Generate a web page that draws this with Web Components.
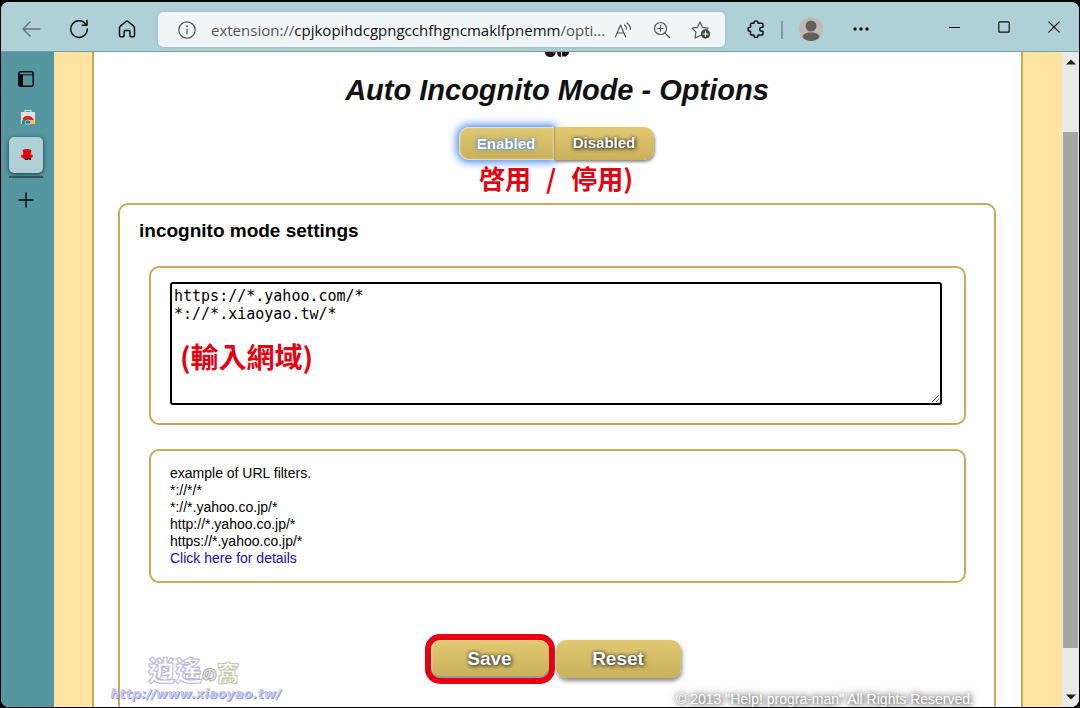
<!DOCTYPE html>
<html lang="en">
<head>
<meta charset="utf-8">
<title>Auto Incognito Mode - Options</title>
<style>
  html, body { margin: 0; height: 100%; }
  body { background: #000; font-family: "Liberation Sans", Arial, sans-serif; color: #000; }
</style>
</head>
<body>
<browser-window>
  <nav-toolbar slot="toolbar"></nav-toolbar>
  <tab-rail slot="tabs"></tab-rail>
  <options-page></options-page>
  <scroll-track slot="scroll"></scroll-track>
</browser-window>

<script>
const define = (name, markup) => customElements.define(name, class extends HTMLElement {
  constructor() {
    super();
    const t = document.createElement('template');
    t.innerHTML = markup;
    this.attachShadow({ mode: 'open' }).append(t.content.cloneNode(true));
  }
});

define('browser-window', `
<style>
  :host { display: block; box-sizing: border-box; height: 100vh; padding: 2px 1px 1px; background: #000; }
  .frame { display: flex; flex-direction: column; height: 100%; border-radius: 8px; overflow: hidden; background: #aed0d6; }
  .body { flex: 1; min-height: 0; display: flex; }
  .view { flex: 1; min-width: 0; overflow: hidden; background: #fee4a0; }
</style>
<div class="frame">
  <slot name="toolbar"></slot>
  <div class="body">
    <slot name="tabs"></slot>
    <div class="view"><slot></slot></div>
    <slot name="scroll"></slot>
  </div>
</div>`);

define('nav-toolbar', `
<style>
  :host { display: block; }
  header { display: flex; align-items: center; height: 49px; padding-left: 6px; background: #aed0d6; border-bottom: 1px solid #7c9da3; }
  button { display: flex; align-items: center; justify-content: center; flex: none; width: 48px; height: 36px; margin: 4px 0 0; padding: 0; border: 0; background: none; color: #111; }
  svg { display: block; fill: none; stroke: currentColor; stroke-width: 1.5; stroke-linecap: round; stroke-linejoin: round; }
  .address svg { stroke-width: 1.2; }
  .dim { color: #63777b; }
  .address { flex: 1; min-width: 0; box-sizing: border-box; display: flex; align-items: center; height: 35px; margin: 6px 7px 0; padding-right: 5px; background: #f0f5f7; border-radius: 5px; box-shadow: 0 0 3px #8fb2b8; color: #555; }
  .address button { width: 39px; height: 35px; margin: 0; color: #555; }
  .address .info { width: 53px; padding-left: 4px; }
  .address .read { width: 30px; margin-right: 4px; }
  .url { flex: 1; min-width: 0; overflow: hidden; white-space: nowrap; font: 15px/24px "Open Sans", "Noto Sans", sans-serif; color: #555; }
  .url b { font-weight: 400; color: #111; }
  .sep { width: 2px; height: 18px; margin: 6px 4px 0 1px; background: #7c9da3; }
  .spacer { width: 42px; flex: none; }
  .win { width: 50px; margin-top: 0; }
</style>
<header>
  <button class="dim" aria-label="Back"><svg width="20" height="18" viewBox="0 0 20 18"><path d="M9 2 2 9l7 7M2 9h17"/></svg></button>
  <button aria-label="Refresh"><svg width="20" height="20" viewBox="0 0 20 20"><path d="M17 5.600A8.300 8.300 0 1 0 18.300 10M18 1.500v4.700h-4.700"/></svg></button>
  <button aria-label="Home"><svg width="18" height="18" viewBox="0 0 18 18"><path d="M1.500 8c0-.8.3-1.300.8-1.800L8 1.500c.6-.5 1.400-.5 2 0l5.700 4.700c.5.5.8 1 .8 1.800v7.500c0 .7-.5 1.200-1.200 1.200h-2.200c-.7 0-1.200-.5-1.200-1.200V11.700c0-.7-.5-1.200-1.200-1.200H7.300c-.7 0-1.200.5-1.200 1.200v3.800c0 .7-.5 1.200-1.200 1.200H2.700c-.7 0-1.200-.5-1.200-1.200z"/></svg></button>
  <div class="address">
    <button class="info" aria-label="Site information"><svg width="18" height="18" viewBox="0 0 18 18"><circle cx="9" cy="9" r="8.200"/><path d="M9 8v5"/><circle cx="9" cy="5.300" r=".4" fill="currentColor"/></svg></button>
    <div class="url">extension://<b>cpjkopihdcgpngcchfhgncmaklfpnemm</b>/opti...</div>
    <button class="read" aria-label="Read aloud"><svg width="18" height="16" viewBox="0 0 18 16"><path d="M1.500 14.800 6.500 3l5 11.800M3.200 11h6.600M10.500 3c1.300 1 2 2.500 2 4M13 1c2.300 1.600 3.500 4 3.500 6.500"/></svg></button>
    <button aria-label="Zoom"><svg width="18" height="18" viewBox="0 0 18 18"><circle cx="7.500" cy="7.500" r="6"/><path d="m12 12 4.500 4.500M4.800 7.500h5.400M7.500 4.800v5.400"/></svg></button>
    <button aria-label="Add to favorites"><svg width="20" height="20" viewBox="0 0 20 20"><path d="M9.500 15.500 4 18l1-5.800L1 8.200l5.500-.8L9 2l2.500 5.400 5.500.8-1 1"/><circle cx="14.500" cy="14" r="4.700" fill="#444" stroke="none"/><path d="M14.500 11.500v5M12 14h5" stroke="#fff"/></svg></button>
  </div>
  <button aria-label="Extensions"><svg width="18" height="18" viewBox="0 0 18 18"><path d="M6.900 3.200a2.100 2.100 0 0 1 4.200 0h3.700c.7 0 1.200.5 1.200 1.200v2.800h-1.200a2 2 0 0 0 0 4H16v2.700c0 .7-.5 1.200-1.200 1.200h-3.700v.3a2.100 2.100 0 0 1-4.200 0v-.3H4.700c-.7 0-1.200-.5-1.200-1.200v-2.700H3a2 2 0 0 1 0-4h.5V4.400c0-.7.5-1.200 1.200-1.200z"/></svg></button>
  <span class="sep"></span>
  <button aria-label="Profile"><svg width="24" height="24" viewBox="0 0 24 24" style="stroke:none"><circle cx="12" cy="12" r="12" fill="#bfb9b5"/><circle cx="12" cy="9" r="5.500" fill="#655f5b"/><path d="M3.500 20.500c0-3 3-5 8.500-5s8.500 2 8.500 5A12 12 0 0 1 12 24a12 12 0 0 1-8.500-3.500z" fill="#655f5b"/></svg></button>
  <button aria-label="Menu" style="width:52px"><svg width="16" height="4" viewBox="0 0 16 4" style="fill:currentColor;stroke:none"><circle cx="2" cy="2" r="1.700"/><circle cx="8" cy="2" r="1.700"/><circle cx="14" cy="2" r="1.700"/></svg></button>
  <span class="spacer"></span>
  <button class="win" aria-label="Minimize"><svg width="11" height="12" viewBox="0 0 11 12" style="stroke-width:1"><path d="M0 6.500h11"/></svg></button>
  <button class="win" aria-label="Maximize"><svg width="12" height="12" viewBox="0 0 12 12" style="stroke-width:1.200"><rect x=".8" y=".8" width="10.400" height="10.400" rx="1"/></svg></button>
  <button class="win" aria-label="Close"><svg width="12" height="12" viewBox="0 0 12 12" style="stroke-width:1.200"><path d="m.8.8 10.400 10.400M11.200.8.8 11.200"/></svg></button>
</header>`);

define('tab-rail', `
<style>
  :host { display: block; flex: none; width: 53px; background: #5596a1; }
  nav { display: flex; flex-direction: column; align-items: center; padding: 8px 3px 0 0; }
  button { display: flex; align-items: center; justify-content: center; width: 36px; height: 38px; padding: 0; border: 0; background: none; color: #0a0a0a; }
  .active { width: 34px; height: 36px; margin-top: 1px; padding-left: 2px; background: #aed0d6; border-radius: 5px; box-shadow: 0 1px 4px #16393f; }
  .store { padding-left: 4px; }
  hr { width: 34px; height: 2px; margin: 3px 0; border: 0; background: #2d5961; }
</style>
<nav>
  <button aria-label="Tab actions"><svg width="16" height="16" viewBox="0 0 16 16"><rect x=".8" y=".8" width="14.400" height="14.400" rx="2" fill="none" stroke="currentColor" stroke-width="1.500"/><path d="M1 3.800h14" stroke="currentColor"/><path d="M1 4h4v11H2.500L1 13.500z" fill="currentColor"/></svg></button>
  <button class="store" aria-label="Web Store"><svg width="16" height="16" viewBox="0 0 16 16"><path d="M5 3V1.500h6V3" fill="none" stroke="#ddd" stroke-width="1.200"/><path d="M1 3h14v12H1z" fill="#dfe1e3"/><path d="M2 15a6.300 6.300 0 0 1 1.500-5.500L8 13v2z" fill="#179c52"/><path d="M2.500 10a6.300 6.300 0 0 1 11.500 1.500L8 12z" fill="#d81f25"/><path d="M9 11h5.500a7 7 0 0 1 0 4H9z" fill="#fbc116"/><path d="M5.500 15a2.800 2.800 0 1 1 5 0z" fill="#2371d3" stroke="#fff" stroke-width=".6"/></svg></button>
  <button class="active" aria-label="Auto Incognito Mode" aria-current="page"><svg width="14" height="14" viewBox="0 0 14 14"><path d="M4 10h7v2H9.500l-.7-1-1 1H5z" fill="#222"/><path d="M2.500 2c2.500-1.200 6.500-1.200 9 0l-1 4.500c1.800-.2 2.800.6 2.300 2-1 2.800-10.500 3-11.800.2-.5-1.300.6-2.300 2.500-2.200z" fill="#e1080d"/><path d="M3.500 6.500c2 1.200 5 1.200 7 0v1c-2.300 1-4.700 1-7 0z" fill="#b00008"/></svg></button>
  <hr>
  <button aria-label="New tab"><svg width="16" height="16" viewBox="0 0 16 16"><path d="M8 .5v15M.5 8h15" stroke="currentColor" stroke-width="1.400"/></svg></button>
</nav>`);

define('scroll-track', `
<style>
  :host { display: flex; flex-direction: column; flex: none; width: 17px; background: #e9e9e9; }
  .arrow { flex: none; height: 20px; display: flex; align-items: center; justify-content: center; }
  .track { flex: 1; display: grid; grid-template-rows: 60fr 515fr 39fr; padding: 0 1px; }
  .thumb { grid-row: 2; background: #a5a5a5; }
</style>
<div class="arrow"><svg width="10" height="6" viewBox="0 0 10 6"><path d="m0 5.500 5-5 5 5z" fill="#222"/></svg></div>
<div class="track"><div class="thumb"></div></div>
<div class="arrow"><svg width="10" height="6" viewBox="0 0 10 6"><path d="m0 .5 5 5 5-5z" fill="#222"/></svg></div>`);

define('gold-button', `
<style>
  :host { display: block; width: 125px; }
  button { display: block; width: 100%; height: 38px; padding: 0; border: 0; border-radius: 10px; background: linear-gradient(#e1c871, #c9b05b); box-shadow: 1px 3px 4px #888; color: #fff; font: bold 19px/38px "Liberation Sans", Arial, sans-serif; text-shadow: 1px 1px 4px #222, 0 0 3px #555; }
  :host([marked]) { width: 118px; }
  :host([marked]) button { outline: 6px solid #e60012; border-radius: 9px; box-shadow: inset 0 -2px 1px #999, inset 1px 0 1px #eee; }
</style>
<button type="button"><slot></slot></button>`);

define('mode-toggle', `
<style>
  :host { display: flex; justify-content: center; padding-right: 2px; }
  button { width: 100px; height: 33px; padding: 0 0 2px; border: 0; border-radius: 0 10px 10px 0; background: linear-gradient(#e1c871, #c9b05b); box-shadow: 1px 2px 3px #888; color: #fff; font: bold 15px/30px "Liberation Sans", Arial, sans-serif; text-shadow: 1px 1px 4px #222, 0 0 3px #444; }
  .on { width: 95px; padding: 0; border-radius: 10px 0 0 10px; box-shadow: inset 0 0 1px 1px #e8e3ca, 0 0 8px 2px #3c7dff; text-shadow: 0 0 5px #2a7cf0, 0 0 1px #3b88c8; }
  .off { border-left: 1px solid #b19b50; }
</style>
<button class="on" type="button" aria-pressed="true">Enabled</button><button class="off" type="button" aria-pressed="false">Disabled</button>`);

define('gold-panel', `
<style>
  :host { display: block; box-sizing: border-box; padding: 14px 22px 18px 19px; border: 2px solid #c6ab5c; border-radius: 10px; }
</style>
<slot></slot>`);

define('red-note', `
<style>
  :host { display: flex; justify-content: center; color: #e60012; font: bold 26px/36px "Noto Sans CJK TC", sans-serif; white-space: nowrap; }
</style>
<slot></slot>`);

define('site-mark', `
<style>
  :host { display: block; font-weight: 700; }
  .name { display: flex; align-items: flex-end; padding-left: 38px; font: 900 27px/32px "Noto Sans CJK TC", sans-serif; color: #fff; -webkit-text-stroke: 1px #b9b9dc; }
  .name small { font-size: 15px; line-height: 24px; color: #eee; -webkit-text-stroke: 1px #aaa; }
  .name em { font-style: normal; font-size: 22px; line-height: 30px; -webkit-text-stroke: 1px #c4c8a8; }
  .site { font: italic bold 13px/16px "DejaVu Sans", sans-serif; color: #c9c9f0; text-shadow: 1px 1px 0 #9b9bd4; }
</style>
<div class="name"><span>逍遙</span><small>の</small><em>窩</em></div>
<div class="site">http://www.xiaoyao.tw/</div>`);

define('options-page', `
<style>
  :host { display: block; }
  main { position: relative; margin: 0 39px 0 38px; padding: 0 25px 0 24px; background: #fff; border: solid #c3aa5b; border-width: 0 2px; }
  .hat { display: block; margin: 0 auto; }
  h1 { margin: 14px 0 18px; text-align: center; font: italic bold 29px/38px "Liberation Sans", Arial, sans-serif; color: #111; }
  .toggle-note { gap: 15px; height: 43px; padding-right: 2px; }
  .settings { padding: 14px 28px 0 29px; }
  h2 { margin: 0 0 23px -10px; font: bold 19px/24px "Liberation Sans", Arial, sans-serif; }
  .field { position: relative; }
  textarea { display: block; box-sizing: border-box; width: 100%; margin: 0; padding: 3px 2px 8px; border: 2px solid #000; border-radius: 3px; outline: 0; background: #fff; color: #000; font: 15px/18px "DejaVu Sans Mono", monospace; resize: both; }
  .field-note { position: absolute; left: 10px; top: 54px; font-size: 28px; line-height: 40px; pointer-events: none; }
  .examples { margin-top: 24px; padding-bottom: 14px; font-size: 14px; line-height: 17px; }
  .examples ul { margin: 0; padding: 0; list-style: none; }
  a { color: #1a0dab; text-decoration: none; }
  .actions { display: flex; justify-content: center; gap: 7px; margin-top: 57px; padding-right: 4px; }
  footer { margin: 13px -8px 0 0; padding-bottom: 40px; text-align: right; font-size: 14px; line-height: 16px; color: #fff; text-shadow: 0 0 8px #444, 1px 1px 5px #555; }
  .mark { position: absolute; left: 16px; top: 602px; }
</style>
<main>
  <svg class="hat" width="26" height="5" viewBox="0 0 26 5" aria-hidden="true"><path d="M1 0h10.500c0 3-2 5-5 5S1 3 1 0zM13 0h4v5c-2.500 0-4-2-4-5zM18 0h7c0 2-1.500 3.500-3.500 4.500H18z" fill="#1c1416"/><path d="M8 0h3l-1 2zM14 0h3v1z" fill="#b1121c"/></svg>
  <h1>Auto Incognito Mode - Options</h1>
  <mode-toggle></mode-toggle>
  <red-note class="toggle-note"><span>啓用</span><span>/</span><span>停用)</span></red-note>
  <gold-panel class="settings">
    <h2><label for="filters">incognito mode settings</label></h2>
    <gold-panel>
      <div class="field">
        <textarea id="filters" rows="6" spellcheck="false">https://*.yahoo.com/*
*://*.xiaoyao.tw/*</textarea>
        <red-note class="field-note">(輸入網域)</red-note>
      </div>
    </gold-panel>
    <gold-panel class="examples">
      <ul>
        <li>example of URL filters.</li>
        <li>*://*/*</li>
        <li>*://*.yahoo.co.jp/*</li>
        <li>http://*.yahoo.co.jp/*</li>
        <li>https://*.yahoo.co.jp/*</li>
        <li><a href="#details">Click here for details</a></li>
      </ul>
    </gold-panel>
    <div class="actions">
      <gold-button marked>Save</gold-button>
      <gold-button>Reset</gold-button>
    </div>
    <footer>© 2013 "Help! progra-man" All Rights Reserved.</footer>
  </gold-panel>
  <site-mark class="mark"></site-mark>
</main>`);
</script>
</body>
</html>
